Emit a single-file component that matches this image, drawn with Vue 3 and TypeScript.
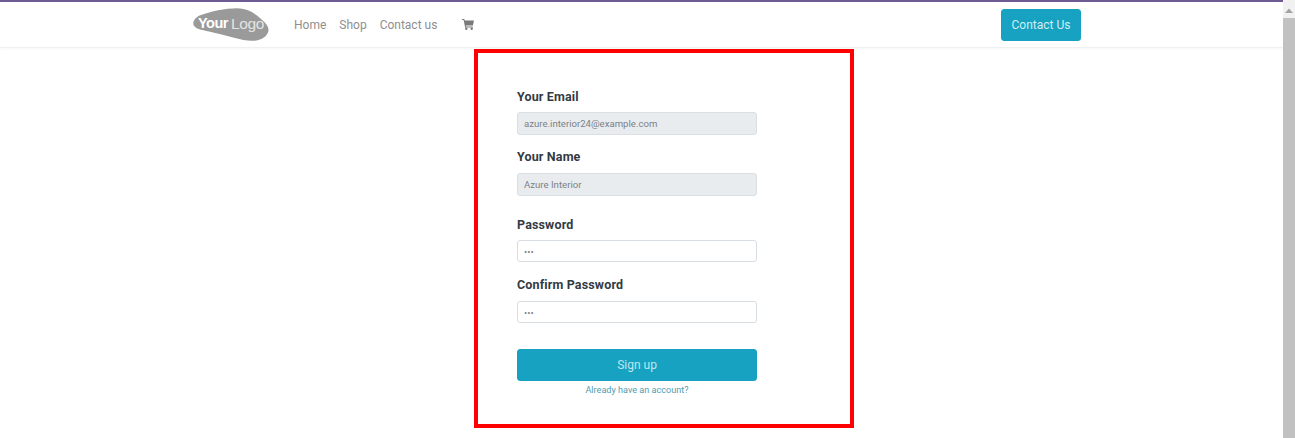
<script setup lang="ts">
const navItems: string[] = ['Home', 'Shop', 'Contact us']
</script>

<template>
  <div class="page">
    <div class="main">
      <header class="header">
        <svg class="logo" width="76" height="34" viewBox="0 0 76 34">
          <path d="M0.3 15 C1 11 4 8.5 8 7 C18 3.5 32 0.3 44 0.3 C54 0.5 62 5 68 11 C73 15 76 19 75.5 23 C74 29 68 32.5 60 32.8 C54 33 48 31.5 42 30 C33 27.5 24 25.5 16 23.5 C9 22 0 21 0.3 15 Z" fill="#9a9a9a" />
          <text x="5" y="20" class="logo-your">Your</text>
          <text x="38" y="21" class="logo-logo">Logo</text>
        </svg>
        <nav class="nav">
          <a v-for="item in navItems" :key="item" class="nav-link">{{ item }}</a>
          <svg class="cart" width="12" height="11" viewBox="0 0 12 11">
            <path d="M0 0 H2.3 L2.7 1.4 H12 L10.9 6.4 H3.9 L4.2 7.5 H10.8 V8.5 H3.2 L1.6 1.1 H0 Z" fill="#7a7a7a" />
            <circle cx="4.3" cy="9.8" r="1.2" fill="#7a7a7a" />
            <circle cx="9.7" cy="9.8" r="1.2" fill="#7a7a7a" />
          </svg>
        </nav>
        <button class="contact">Contact Us</button>
      </header>
      <form class="card" @submit.prevent>
        <label class="label">Your Email</label>
        <input class="input disabled tall" readonly value="azure.interior24@example.com" />
        <label class="label second">Your Name</label>
        <input class="input disabled tall" readonly value="Azure Interior" />
        <label class="label third">Password</label>
        <input class="input" type="password" readonly value="123" />
        <label class="label fourth">Confirm Password</label>
        <input class="input" type="password" readonly value="123" />
        <button class="signup">Sign up</button>
        <a class="account">Already have an account?</a>
      </form>
    </div>
    <aside class="scrollbar">
      <svg class="arrow" width="12" height="18" viewBox="0 0 12 18">
        <path d="M2 13 L6 8.5 L10 13 Z" fill="#a3a3a3" />
      </svg>
      <div class="thumb"></div>
    </aside>
  </div>
</template>

<style>
html, body { margin: 0; background: #fff; overflow: hidden; }
</style>

<style scoped>
.page {
  display: flex;
  height: 438px;
  width: 1295px;
  overflow: hidden;
  font-family: Roboto, sans-serif;
}
.main {
  flex: 1;
  min-width: 0;
  display: flex;
  flex-direction: column;
  border-top: 2px solid #6f5a94;
}
.header {
  box-sizing: border-box;
  height: 46px;
  flex: none;
  display: flex;
  align-items: center;
  padding: 0 202px 0 193px;
  border-bottom: 1px solid #f0f0f0;
  box-shadow: 0 1px 2px rgba(0, 0, 0, 0.03);
}
.logo { flex: none; margin-top: 1px; }
.logo-your { font: 700 14.5px "Liberation Sans", sans-serif; fill: #fff; letter-spacing: -0.5px; }
.logo-logo { font: 400 15.5px "Liberation Sans", sans-serif; fill: #e4e4e4; letter-spacing: -0.4px; }
.nav {
  display: flex;
  align-items: center;
  gap: 13px;
  margin-left: 25px;
}
.nav-link { font-size: 12px; color: #8f8f8f; }
.cart { margin-left: 12px; }
.contact {
  margin-left: auto;
  width: 80px;
  height: 32px;
  padding: 0;
  background: #17a2c1;
  border: 1px solid #17a2c1;
  border-radius: 3px;
  color: #d0eef5;
  font: 12px Roboto, sans-serif;
}
.card {
  box-sizing: border-box;
  width: 380px;
  height: 379px;
  flex: none;
  margin: 1px 0 0 474px;
  border: 4px solid #ff0000;
  padding: 36px 93px 0 39px;
  display: flex;
  flex-direction: column;
  align-items: stretch;
}
.label {
  font: 700 12.5px/16px Roboto, sans-serif;
  color: #333a42;
  margin-bottom: 7px;
  letter-spacing: 0.15px;
}
.second { margin-top: 14px; margin-bottom: 8px; }
.third { margin-top: 21px; margin-bottom: 7px; }
.fourth { margin-top: 15px; margin-bottom: 8px; }
.input {
  box-sizing: border-box;
  width: 240px;
  height: 22px;
  flex: none;
  padding: 0 6px;
  background: #fff;
  border: 1px solid #d8dde3;
  border-radius: 3px;
  outline: none;
  color: #7b8088;
  font: 9.6px Roboto, sans-serif;
}
.tall { height: 23px; }
.disabled { background: #e9ecef; border-color: #dadfe4; }
.signup {
  width: 240px;
  height: 32px;
  margin-top: 26px;
  padding: 0;
  background: #17a2c1;
  border: 1px solid #17a2c1;
  border-radius: 3px;
  color: #bfe6ef;
  font: 12px Roboto, sans-serif;
}
.account {
  width: 240px;
  margin-top: 3px;
  text-align: center;
  font: 9.1px/13px Roboto, sans-serif;
  color: #4f9db1;
}
.scrollbar {
  width: 12px;
  flex: none;
  display: flex;
  flex-direction: column;
  background: #f1f1f1;
}
.arrow { flex: none; }
.thumb { flex: 1; background: #c1c1c1; }
</style>
